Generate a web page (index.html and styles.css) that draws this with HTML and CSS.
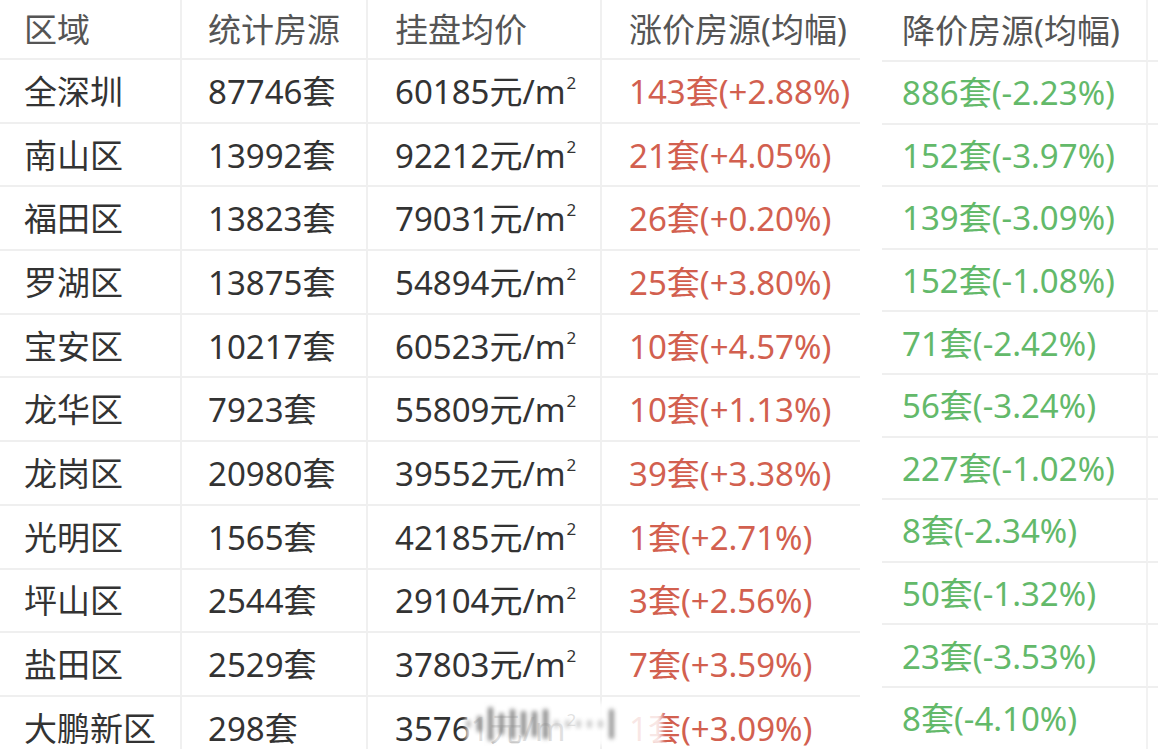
FILE: index.html
```html
<!DOCTYPE html>
<html lang="zh-CN">
<head>
<meta charset="utf-8">
<title>深圳房源统计</title>
<link rel="stylesheet" href="styles.css">
</head>
<body>
<div class="page">
  <div class="main">
    <div class="c h c1">区域</div><div class="c h c2">统计房源</div><div class="c h c3">挂盘均价</div><div class="c h c4">涨价房源(均幅)</div>

    <div class="c c1">全深圳</div><div class="c c2">87746套</div><div class="c c3">60185元/m<sup>2</sup></div><div class="c c4 up">143套(+2.88%)</div>
    <div class="c c1">南山区</div><div class="c c2">13992套</div><div class="c c3">92212元/m<sup>2</sup></div><div class="c c4 up">21套(+4.05%)</div>
    <div class="c c1">福田区</div><div class="c c2">13823套</div><div class="c c3">79031元/m<sup>2</sup></div><div class="c c4 up">26套(+0.20%)</div>
    <div class="c c1">罗湖区</div><div class="c c2">13875套</div><div class="c c3">54894元/m<sup>2</sup></div><div class="c c4 up">25套(+3.80%)</div>
    <div class="c c1">宝安区</div><div class="c c2">10217套</div><div class="c c3">60523元/m<sup>2</sup></div><div class="c c4 up">10套(+4.57%)</div>
    <div class="c c1">龙华区</div><div class="c c2">7923套</div><div class="c c3">55809元/m<sup>2</sup></div><div class="c c4 up">10套(+1.13%)</div>
    <div class="c c1">龙岗区</div><div class="c c2">20980套</div><div class="c c3">39552元/m<sup>2</sup></div><div class="c c4 up">39套(+3.38%)</div>
    <div class="c c1">光明区</div><div class="c c2">1565套</div><div class="c c3">42185元/m<sup>2</sup></div><div class="c c4 up">1套(+2.71%)</div>
    <div class="c c1">坪山区</div><div class="c c2">2544套</div><div class="c c3">29104元/m<sup>2</sup></div><div class="c c4 up">3套(+2.56%)</div>
    <div class="c c1">盐田区</div><div class="c c2">2529套</div><div class="c c3">37803元/m<sup>2</sup></div><div class="c c4 up">7套(+3.59%)</div>
    <div class="c c1">大鹏新区</div><div class="c c2">298套</div><div class="c c3">35761元/m<sup>2</sup></div><div class="c c4 up">1套(+3.09%)</div>
  </div>

  <div class="side">
    <div class="s h">降价房源(均幅)</div><div class="s e"></div>
    <div class="s down">886套(-2.23%)</div><div class="s e"></div>
    <div class="s down">152套(-3.97%)</div><div class="s e"></div>
    <div class="s down">139套(-3.09%)</div><div class="s e"></div>
    <div class="s down">152套(-1.08%)</div><div class="s e"></div>
    <div class="s down">71套(-2.42%)</div><div class="s e"></div>
    <div class="s down">56套(-3.24%)</div><div class="s e"></div>
    <div class="s down">227套(-1.02%)</div><div class="s e"></div>
    <div class="s down">8套(-2.34%)</div><div class="s e"></div>
    <div class="s down">50套(-1.32%)</div><div class="s e"></div>
    <div class="s down">23套(-3.53%)</div><div class="s e"></div>
    <div class="s down">8套(-4.10%)</div><div class="s e"></div>
  </div>

  <div class="wm"><span></span><span></span><span></span><span></span><span></span><span></span><span></span><span></span><span></span><span></span><span></span><span></span><span></span><span></span></div>
</div>
</body>
</html>
```

FILE: styles.css
```css
html, body {
  margin: 0;
  padding: 0;
  background: #ffffff;
}
body {
  width: 1158px;
  height: 749px;
  overflow: hidden;
  font-family: "Noto Sans", "Noto Sans CJK SC", sans-serif;
  font-size: 33px;
  color: #333333;
}
.page {
  position: relative;
  display: flex;
  align-items: flex-start;
}
.main {
  display: grid;
  grid-template-columns: 182px 186px 234px 258px;
  grid-template-rows: 60px;
  grid-auto-rows: 63.7px;
  width: 860px;
  flex: none;
}
.c {
  display: flex;
  align-items: center;
  box-sizing: border-box;
  border-bottom: 2px solid #efefef;
  white-space: nowrap;
  line-height: 1;
  padding-top: 1px;
}
.c1 { padding-left: 24px; border-right: 2px solid #f0f0f0; }
.c2 { padding-left: 26px; border-right: 2px solid #f0f0f0; }
.c3 { padding-left: 27px; border-right: 2px solid #f0f0f0; }
.c4 { padding-left: 27px; }
.h { color: #555555; }
.up { color: #d2604f; }
.down { color: #63b96a; }
.c3 sup {
  display: inline-block;
  font-size: 17px;
  line-height: 1;
  align-self: flex-start;
  margin-top: 13px;
  margin-left: 1px;
}
.c3 { align-items: center; }
.side {
  display: grid;
  grid-template-columns: 266px 1fr;
  grid-template-rows: 62px;
  grid-auto-rows: 62.6px;
  margin-left: 22px;
  flex: 1;
}
.s {
  display: flex;
  align-items: center;
  box-sizing: border-box;
  border-bottom: 2px solid #efefef;
  border-right: 2px solid #f2f2f2;
  padding-left: 20px;
  white-space: nowrap;
  line-height: 1;
  padding-top: 1px;
}
.s.e { border-right: none; padding: 0; }
.wm {
  position: absolute;
  left: 466px;
  top: 703px;
  width: 196px;
  height: 42px;
  display: flex;
  align-items: center;
  gap: 6px;
  background: rgba(255,255,255,0.85);
  filter: blur(2px);
}
.wm span {
  display: block;
  width: 5px;
  height: 26px;
  background: #8a8a8a;
  border-radius: 2px;
}
.wm span:nth-child(1) { height: 8px; background: #bbb; }
.wm span:nth-child(2) { height: 16px; }
.wm span:nth-child(3) { height: 34px; }
.wm span:nth-child(4) { height: 22px; }
.wm span:nth-child(5) { height: 30px; }
.wm span:nth-child(8) { height: 30px; }
.wm span:nth-child(9) { height: 8px; background: #ccc; }
.wm span:nth-child(10) { height: 8px; background: #ccc; }
.wm span:nth-child(11) { height: 8px; background: #ccc; }
.wm span:nth-child(12) { height: 8px; background: #ccc; }
.wm span:nth-child(13) { height: 8px; background: #ccc; }
.wm span:nth-child(14) { height: 30px; background: #999; }
```
